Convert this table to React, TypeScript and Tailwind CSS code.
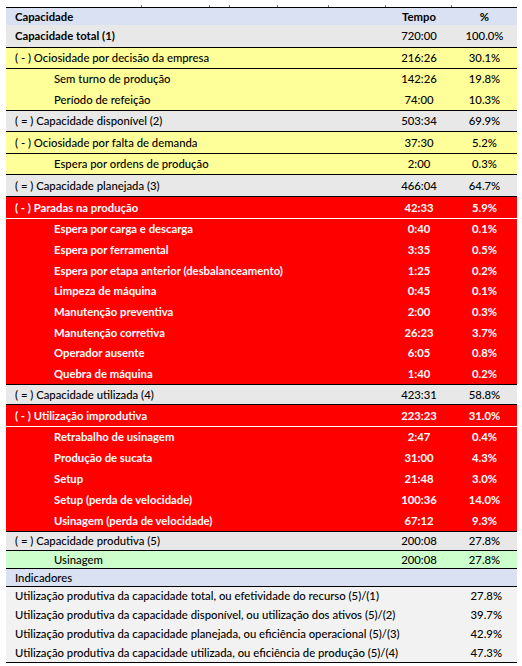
import React from 'react';

type Kind = 'header' | 'gray' | 'yellow' | 'red' | 'green' | 'ind';
interface Row {
  label: string;
  t?: string;
  p?: string;
  kind: Kind;
  sub?: boolean;
  bold?: boolean;
  boldVals?: boolean;
  h: string;
  top?: 'b' | 'w';
}

const rows: Row[] = [
  { label: 'Capacidade', t: 'Tempo', p: '%', kind: 'header', bold: true, boldVals: true, h: 'h-[18px]', top: 'b' },
  { label: 'Capacidade total (1)', t: '720:00', p: '100.0%', kind: 'gray', bold: true, h: 'h-[22px]' },
  { label: '( - ) Ociosidade por decisão da empresa', t: '216:26', p: '30.1%', kind: 'yellow', h: 'h-[21px]', top: 'b' },
  { label: 'Sem turno de produção', t: '142:26', p: '19.8%', kind: 'yellow', sub: true, h: 'h-[21px]', top: 'b' },
  { label: 'Período de refeição', t: '74:00', p: '10.3%', kind: 'yellow', sub: true, h: 'h-[21px]' },
  { label: '( = ) Capacidade disponível (2)', t: '503:34', p: '69.9%', kind: 'gray', h: 'h-[21px]', top: 'b' },
  { label: '( - ) Ociosidade por falta de demanda', t: '37:30', p: '5.2%', kind: 'yellow', h: 'h-[22px]', top: 'b' },
  { label: 'Espera por ordens de produção', t: '2:00', p: '0.3%', kind: 'yellow', sub: true, h: 'h-[21px]', top: 'b' },
  { label: '( = ) Capacidade planejada (3)', t: '466:04', p: '64.7%', kind: 'gray', h: 'h-[22px]', top: 'b' },
  { label: '( - ) Paradas na produção', t: '42:33', p: '5.9%', kind: 'red', bold: true, boldVals: true, h: 'h-[22px]', top: 'b' },
  { label: 'Espera por carga e descarga', t: '0:40', p: '0.1%', kind: 'red', sub: true, bold: true, boldVals: true, h: 'h-[21px]', top: 'w' },
  { label: 'Espera por ferramental', t: '3:35', p: '0.5%', kind: 'red', sub: true, bold: true, boldVals: true, h: 'h-[21px]' },
  { label: 'Espera por etapa anterior (desbalanceamento)', t: '1:25', p: '0.2%', kind: 'red', sub: true, bold: true, boldVals: true, h: 'h-[21px]' },
  { label: 'Limpeza de máquina', t: '0:45', p: '0.1%', kind: 'red', sub: true, bold: true, boldVals: true, h: 'h-[20px]' },
  { label: 'Manutenção preventiva', t: '2:00', p: '0.3%', kind: 'red', sub: true, bold: true, boldVals: true, h: 'h-[21px]' },
  { label: 'Manutenção corretiva', t: '26:23', p: '3.7%', kind: 'red', sub: true, bold: true, boldVals: true, h: 'h-[21px]' },
  { label: 'Operador ausente', t: '6:05', p: '0.8%', kind: 'red', sub: true, bold: true, boldVals: true, h: 'h-[20px]' },
  { label: 'Quebra de máquina', t: '1:40', p: '0.2%', kind: 'red', sub: true, bold: true, boldVals: true, h: 'h-[21px]' },
  { label: '( = ) Capacidade utilizada (4)', t: '423:31', p: '58.8%', kind: 'gray', h: 'h-[20px]', top: 'b' },
  { label: '( - ) Utilização improdutiva', t: '223:23', p: '31.0%', kind: 'red', bold: true, boldVals: true, h: 'h-[22px]', top: 'b' },
  { label: 'Retrabalho de usinagem', t: '2:47', p: '0.4%', kind: 'red', sub: true, bold: true, boldVals: true, h: 'h-[21px]', top: 'w' },
  { label: 'Produção de sucata', t: '31:00', p: '4.3%', kind: 'red', sub: true, bold: true, boldVals: true, h: 'h-[21px]' },
  { label: 'Setup', t: '21:48', p: '3.0%', kind: 'red', sub: true, bold: true, boldVals: true, h: 'h-[21px]' },
  { label: 'Setup (perda de velocidade)', t: '100:36', p: '14.0%', kind: 'red', sub: true, bold: true, boldVals: true, h: 'h-[21px]' },
  { label: 'Usinagem (perda de velocidade)', t: '67:12', p: '9.3%', kind: 'red', sub: true, bold: true, boldVals: true, h: 'h-[21px]' },
  { label: '( = ) Capacidade produtiva (5)', t: '200:08', p: '27.8%', kind: 'gray', h: 'h-[19px]', top: 'b' },
  { label: 'Usinagem', t: '200:08', p: '27.8%', kind: 'green', sub: true, h: 'h-[18px]', top: 'b' },
  { label: 'Indicadores', kind: 'header', h: 'h-[18px]', top: 'b' },
];

const indicators = [
  ['Utilização produtiva da capacidade total, ou efetividade do recurso (5)/(1)', '27.8%'],
  ['Utilização produtiva da capacidade disponível, ou utilização dos ativos (5)/(2)', '39.7%'],
  ['Utilização produtiva da capacidade planejada, ou eficiência operacional (5)/(3)', '42.9%'],
  ['Utilização produtiva da capacidade utilizada, ou eficiência de produção (5)/(4)', '47.3%'],
];

const bgClass: Record<Kind, string> = {
  header: 'bg-[#d9e1f2] text-black',
  gray: 'bg-[#e8e8e8] text-black',
  yellow: 'bg-[#ffff99] text-black',
  red: 'bg-[#ff0000] text-white',
  green: 'bg-[#ccffcc] text-black',
  ind: 'bg-[#f2f2f2] text-black',
};

function TableRow({ r }: { r: Row }) {
  const border = r.top === 'b' ? 'border-t border-black' : r.top === 'w' ? 'border-t border-white' : '';
  return (
    <div className={`flex items-center ${r.h} ${border} ${bgClass[r.kind]}`}>
      <div className={`w-[380px] whitespace-nowrap ${r.sub ? 'pl-[48px]' : 'pl-[9px]'} ${r.bold ? 'font-bold' : 'font-medium'}`}>
        {r.label}
      </div>
      <div className={`w-[66px] text-center ${r.boldVals ? 'font-bold' : 'font-medium'}`}>{r.t}</div>
      <div className={`w-[65px] text-center ${r.boldVals ? 'font-bold' : 'font-medium'}`}>{r.p}</div>
    </div>
  );
}

const ticks = ['w-[136px]', 'w-[68px]', 'w-[20px]', 'w-[48px]', 'w-[51px]', 'w-[57px]', 'w-[66px]'];

export default function App() {
  return (
    <div className="w-[522px] h-[666px] bg-white pl-[6px] text-[11.3px] leading-none" style={{ fontFamily: 'Lato, "Noto Sans", sans-serif' }}>
      <div className="flex items-end h-[7px] w-[511px]">
        {ticks.map((w, i) => (
          <div key={i} className={`${w} h-[2px] border-r border-[#7a7a7a]`} />
        ))}
      </div>
      <div className="w-[511px] border-b border-black">
        {rows.map((r, i) => (
          <TableRow key={i} r={r} />
        ))}
        {indicators.map(([l, v], i) => (
          <div key={i} className={`flex items-center h-[19px] ${i === 0 ? 'border-t border-black' : ''} ${bgClass.ind}`}>
            <div className="flex-1 whitespace-nowrap pl-[9px] font-medium">{l}</div>
            <div className="w-[65px] text-right pr-[15px] font-medium">{v}</div>
          </div>
        ))}
      </div>
    </div>
  );
}
